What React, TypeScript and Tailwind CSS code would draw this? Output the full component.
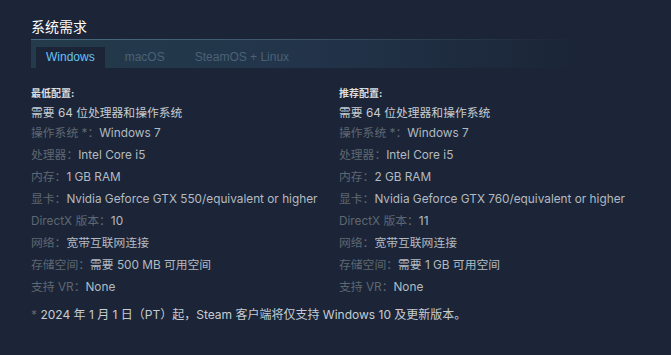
const font = "font-['Inter','Noto_Sans_CJK_SC',sans-serif]";

type Row = { label?: string; value: string };

const minimum: Row[] = [
  { value: '需要 64 位处理器和操作系统' },
  { label: '操作系统 *：', value: 'Windows 7' },
  { label: '处理器：', value: 'Intel Core i5' },
  { label: '内存：', value: '1 GB RAM' },
  { label: '显卡：', value: 'Nvidia Geforce GTX 550/equivalent or higher' },
  { label: 'DirectX 版本：', value: '10' },
  { label: '网络：', value: '宽带互联网连接' },
  { label: '存储空间：', value: '需要 500 MB 可用空间' },
  { label: '支持 VR：', value: 'None' },
];

const recommended: Row[] = [
  { value: '需要 64 位处理器和操作系统' },
  { label: '操作系统 *：', value: 'Windows 7' },
  { label: '处理器：', value: 'Intel Core i5' },
  { label: '内存：', value: '2 GB RAM' },
  { label: '显卡：', value: 'Nvidia Geforce GTX 760/equivalent or higher' },
  { label: 'DirectX 版本：', value: '11' },
  { label: '网络：', value: '宽带互联网连接' },
  { label: '存储空间：', value: '需要 1 GB 可用空间' },
  { label: '支持 VR：', value: 'None' },
];

function Specs({ title, rows }: { title: string; rows: Row[] }) {
  return (
    <div className="w-[308px]">
      <div className="text-[10px] font-bold leading-[14px] text-[#dcdedf]">{title}</div>
      <ul className="mt-[4px] text-[11.8px]">
        {rows.map((r, i) => (
          <li key={i} className={i === 0 ? 'whitespace-nowrap leading-[18px]' : 'whitespace-nowrap leading-[22px]'}>
            {r.label && <span className="text-[#5f6772]">{r.label}</span>}
            <span className={r.label ? 'text-[#b4bac1]' : 'text-[#c6ccd2]'}>{r.value}</span>
          </li>
        ))}
      </ul>
    </div>
  );
}

export default function App() {
  const tabs = ['Windows', 'macOS', 'SteamOS + Linux'];

  return (
    <div className={`w-[671px] h-[355px] bg-[#1b2537] pl-[31px] pt-[18px] ${font}`}>
      <h2 className="text-[14px] leading-[18px] text-white">系统需求</h2>

      {/* Tab strip */}
      <div className="mt-[3px] w-[545px] h-px bg-gradient-to-r from-[#4b6b80] via-[#3b5468] to-transparent" />
      <div className="w-[545px] h-[28px] pl-[5px] pt-[7px] flex gap-[10px] bg-gradient-to-r from-[#233b4b] via-[#22344a] to-transparent">
        {tabs.map((t, i) => (
          <div
            key={t}
            className={
              i === 0
                ? "px-[10px] leading-[21px] text-[12px] text-[#67c1f5] bg-[#1b2537] font-['Arial','Liberation_Sans',sans-serif]"
                : "px-[10px] leading-[21px] text-[12px] text-[#4a6276] font-['Arial','Liberation_Sans',sans-serif]"
            }
          >
            {t}
          </div>
        ))}
      </div>

      <div className="mt-[18px] flex">
        <Specs title="最低配置:" rows={minimum} />
        <Specs title="推荐配置:" rows={recommended} />
      </div>

      <p className="mt-[8px] text-[12px] leading-[18px] text-[#c6ccd2]">
        <span className="text-[#5f6772]">*</span> 2024 年 1 月 1 日（PT）起，Steam 客户端将仅支持 Windows 10 及更新版本。
      </p>
    </div>
  );
}
